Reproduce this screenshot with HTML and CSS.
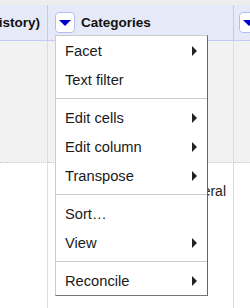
FILE: index.html
```html
<!DOCTYPE html>
<html lang="en">
<head>
    <meta charset="UTF-8">
    <meta name="viewport" content="width=device-width, initial-scale=1.0">
    <title>Column menu</title>
    <link rel="stylesheet" href="styles.css">
</head>
<body>
    <!-- Strip above the table -->
    <div class="top-strip"></div>

    <!-- Data table -->
    <div class="data-table">
        <div class="th th-first"><span class="th-name">Wikipedia (history)</span></div>
        <div class="th"><button class="col-menu-btn"></button><span class="th-name">Categories</span></div>
        <div class="th th-last"><button class="col-menu-btn"></button><span class="th-name">Links</span></div>

        <div class="td row-odd"></div>
        <div class="td row-odd"></div>
        <div class="td row-odd td-last"></div>

        <div class="td"></div>
        <div class="td td-text">Liberal</div>
        <div class="td td-last"></div>
    </div>

    <!-- Column dropdown menu -->
    <div class="menu">
        <div class="menu-item"><span>Facet</span><span class="submenu-arrow"></span></div>
        <div class="menu-item"><span>Text filter</span></div>
        <div class="menu-separator"></div>
        <div class="menu-item"><span>Edit cells</span><span class="submenu-arrow"></span></div>
        <div class="menu-item"><span>Edit column</span><span class="submenu-arrow"></span></div>
        <div class="menu-item"><span>Transpose</span><span class="submenu-arrow"></span></div>
        <div class="menu-separator"></div>
        <div class="menu-item"><span>Sort…</span></div>
        <div class="menu-item"><span>View</span><span class="submenu-arrow"></span></div>
        <div class="menu-separator"></div>
        <div class="menu-item"><span>Reconcile</span><span class="submenu-arrow"></span></div>
    </div>
</body>
</html>
```

FILE: styles.css
```css
/* General */
body {
    font-family: "Liberation Sans", Arial, sans-serif;
    color: #222;
    margin: 0;
    padding: 0;
    background-color: #fff;
    overflow: hidden;
}

.top-strip {
    height: 5px;
    background-color: #eee;
}

/* Table */
.data-table {
    display: grid;
    grid-template-columns: 48px 186px 1fr;
    grid-template-rows: 36px 122px 1fr;
    height: 303px;
}

.th {
    display: flex;
    align-items: center;
    background-color: #e6eaf8;
    border-right: 1px solid #c3cbf4;
    border-bottom: 1px solid #c3cbf4;
    padding-left: 7px;
    overflow: hidden;
    white-space: nowrap;
}

.th-first {
    justify-content: flex-end;
    padding-left: 0;
    padding-right: 7px;
}

.th-last {
    padding-left: 5px;
    border-right: none;
}

.th-name {
    flex-shrink: 0;
    font-weight: bold;
    font-size: 13.5px;
    color: #111;
}

.col-menu-btn {
    flex-shrink: 0;
    display: flex;
    align-items: center;
    justify-content: center;
    width: 20px;
    height: 21px;
    padding: 0;
    margin-right: 6px;
    background-color: #fff;
    border: 1px solid #b4bdf0;
    border-radius: 4px;
}

.col-menu-btn::after {
    content: "";
    border-top: 6px solid #0000cc;
    border-left: 6px solid transparent;
    border-right: 6px solid transparent;
}

.td {
    border-right: 1px solid #ddd;
}

.td-last {
    border-right: none;
}

.row-odd {
    background-color: #f2f2f2;
    border-bottom: 1px dotted #ccc;
}

.td-text {
    font-size: 14px;
    line-height: 18px;
    text-align: right;
    padding: 19px 7px 0 0;
}

/* Dropdown menu */
.menu {
    position: absolute;
    left: 55px;
    top: 35px;
    width: 151px;
    background-color: #fff;
    border: 1px solid #ccc;
    border-right-color: #666;
    border-bottom-color: #777;
}

.menu-item {
    display: flex;
    align-items: center;
    justify-content: space-between;
    height: 29px;
    padding: 0 10px 0 9px;
    font-size: 14.7px;
    color: #1a1a1a;
}

.submenu-arrow {
    border-left: 5px solid #222;
    border-top: 5px solid transparent;
    border-bottom: 5px solid transparent;
}

.menu-separator {
    height: 1px;
    margin: 4px 0;
    background-color: #ccc;
}
```
